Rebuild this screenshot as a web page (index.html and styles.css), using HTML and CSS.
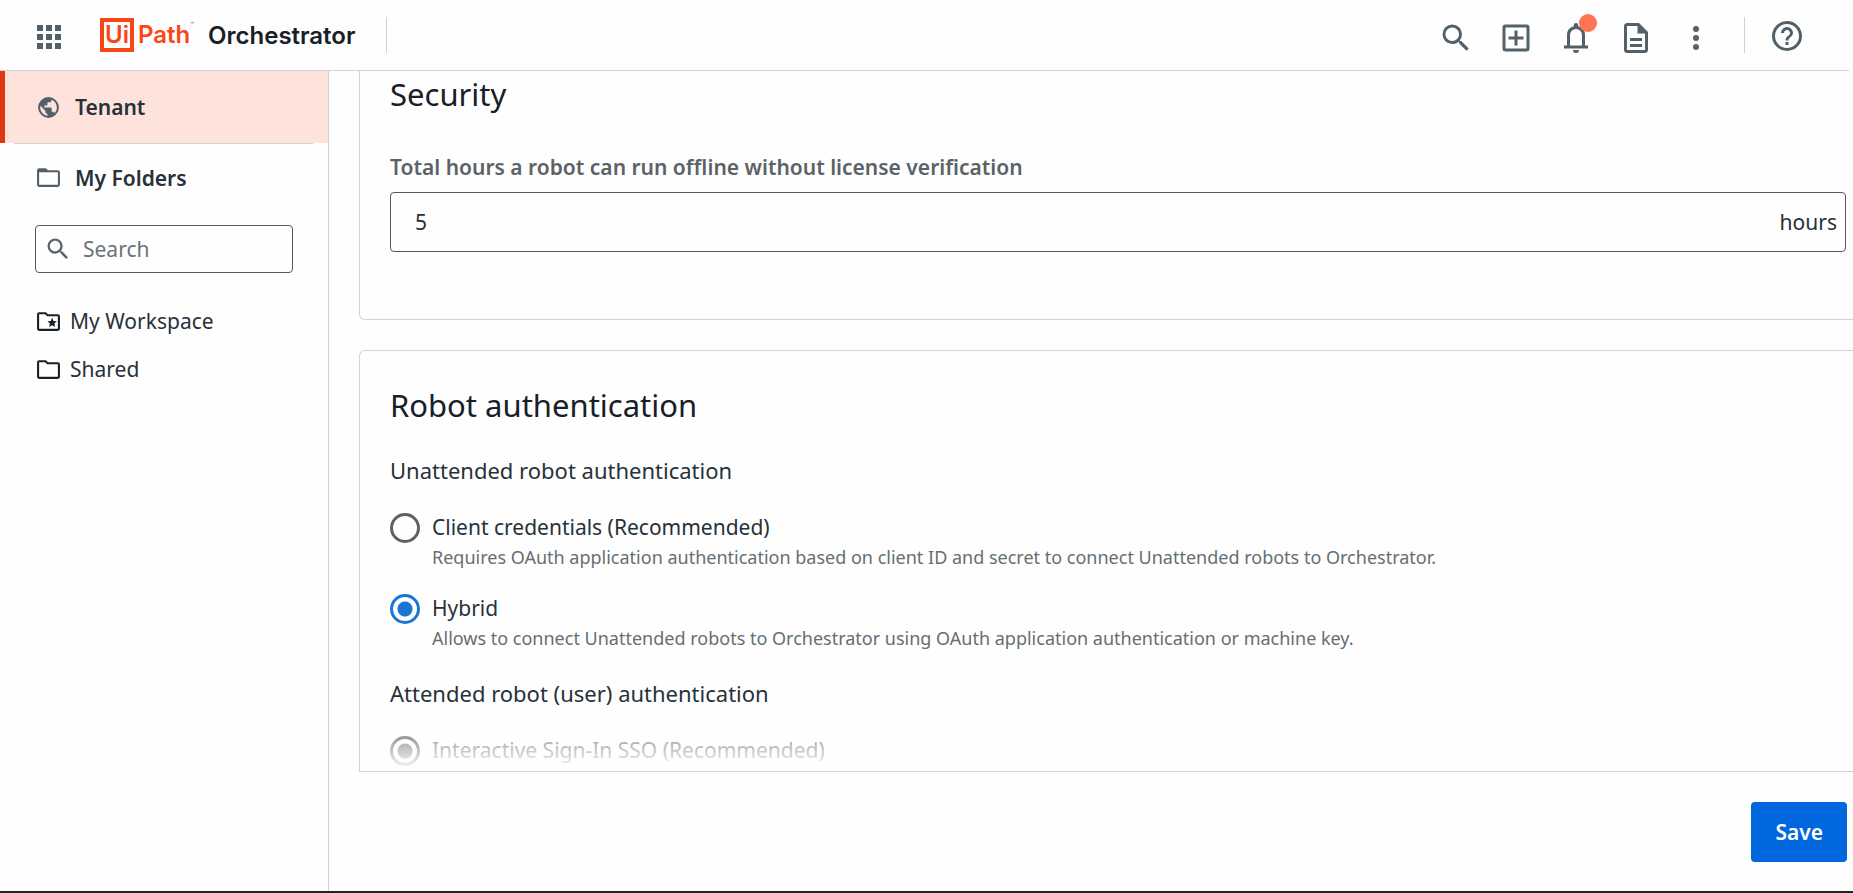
FILE: index.html
```html
<!DOCTYPE html>
<html lang="en">
<head>
<meta charset="utf-8">
<title>UiPath Orchestrator</title>
<link rel="stylesheet" href="styles.css">
</head>
<body>
<header class="topbar">
  <button class="icon-btn launcher" type="button" aria-label="Apps">
    <svg width="24" height="24" viewBox="0 0 24 24"><path d="M0 0h6v6H0zM9 0h6v6H9zM18 0h6v6h-6zM0 9h6v6H0zM9 9h6v6H9zM18 9h6v6h-6zM0 18h6v6H0zM9 18h6v6H9zM18 18h6v6h-6z"/></svg>
  </button>
  <a class="brand" href="#">
    <span class="brand-box">Ui</span><span class="brand-path">Path</span><span class="brand-tm">™</span>
    <span class="brand-name">Orchestrator</span>
  </a>
  <span class="rule"></span>
  <nav class="tools" aria-label="Tools">
    <button class="icon-btn" type="button" aria-label="Search">
      <svg width="36" height="36" viewBox="0 0 24 24"><path d="M15.5 14h-.79l-.28-.27A6.47 6.47 0 0 0 16 9.5 6.5 6.5 0 1 0 9.5 16c1.61 0 3.09-.59 4.23-1.57l.27.28v.79l5 4.99L20.49 19zm-6 0C7.01 14 5 11.99 5 9.5S7.01 5 9.5 5 14 7.01 14 9.5 11.99 14 9.5 14"/></svg>
    </button>
    <button class="icon-btn" type="button" aria-label="Add">
      <svg width="36" height="36" viewBox="0 0 24 24"><path d="M19 3H5a2 2 0 0 0-2 2v14a2 2 0 0 0 2 2h14a2 2 0 0 0 2-2V5a2 2 0 0 0-2-2m0 16H5V5h14zm-8-2h2v-4h4v-2h-4V7h-2v4H7v2h4z"/></svg>
    </button>
    <button class="icon-btn bell" type="button" aria-label="Notifications">
      <svg width="36" height="36" viewBox="0 0 24 24"><path d="M4 19v-2h2v-7a6 6 0 0 1 4.500-5.800V3.500a1.500 1.500 0 0 1 3 0v.7A6 6 0 0 1 18 10v7h2v2zm8 3a2 2 0 0 1-2-2h4a2 2 0 0 1-2 2m-4-5h8v-7a4 4 0 0 0-8 0z"/></svg>
      <span class="dot"></span>
    </button>
    <button class="icon-btn" type="button" aria-label="Documents">
      <svg width="36" height="36" viewBox="0 0 24 24"><path d="M8 16h8v2H8zm0-4h8v2H8zm6-10H6c-1.100 0-2 .9-2 2v16c0 1.100.89 2 1.990 2H18c1.100 0 2-.9 2-2V8zm4 18H6V4h7v5h5z"/></svg>
    </button>
    <button class="icon-btn" type="button" aria-label="More">
      <svg width="36" height="36" viewBox="0 0 24 24"><path d="M12 8a2 2 0 1 0 0-4 2 2 0 0 0 0 4m0 2a2 2 0 1 0 0 4 2 2 0 0 0 0-4m0 6a2 2 0 1 0 0 4 2 2 0 0 0 0-4"/></svg>
    </button>
  </nav>
  <span class="rule"></span>
  <button class="icon-btn help" type="button" aria-label="Help">
    <svg width="36" height="36" viewBox="0 0 24 24"><path d="M11 18h2v-2h-2zm1-16a10 10 0 1 0 0 20 10 10 0 0 0 0-20m0 18c-4.410 0-8-3.590-8-8s3.590-8 8-8 8 3.590 8 8-3.590 8-8 8m0-14a4 4 0 0 0-4 4h2c0-1.100.9-2 2-2s2 .9 2 2c0 2-3 1.750-3 5h2c0-2.250 3-2.500 3-5a4 4 0 0 0-4-4"/></svg>
  </button>
</header>

<div class="shell">
  <aside class="sidebar">
    <nav class="primary">
      <a class="nav-item active" href="#">
        <svg width="25" height="25" viewBox="0 0 24 24"><path d="M12 2a10 10 0 1 0 0 20 10 10 0 0 0 0-20m-1 17.930c-3.950-.49-7-3.850-7-7.930 0-.62.080-1.210.21-1.790L9 15v1c0 1.100.9 2 2 2zm6.900-2.540c-.26-.81-1-1.390-1.900-1.390h-1v-3c0-.55-.45-1-1-1H8v-2h2c.55 0 1-.45 1-1V7h2c1.100 0 2-.9 2-2v-.41c2.930 1.190 5 4.060 5 7.410 0 2.080-.8 3.970-2.100 5.390"/></svg>
        Tenant
      </a>
      <hr class="divider">
      <a class="nav-item" href="#">
        <svg width="25" height="25" viewBox="0 0 24 24"><path d="M3 3h6.500l2 2H21a2 2 0 0 1 2 2v12a2 2 0 0 1-2 2H3a2 2 0 0 1-2-2V5a2 2 0 0 1 2-2m0 4v12h18V7z"/></svg>
        My Folders
      </a>
    </nav>
    <label class="search">
      <svg width="28" height="28" viewBox="0 0 24 24"><path d="M15.500 14h-.79l-.28-.27A6.470 6.470 0 0 0 16 9.500 6.500 6.500 0 1 0 9.500 16c1.610 0 3.090-.59 4.230-1.570l.27.28v.79l5 4.990L20.490 19zm-6 0C7.010 14 5 11.990 5 9.500S7.010 5 9.500 5 14 7.010 14 9.500 11.990 14 9.500 14"/></svg>
      <input type="search" placeholder="Search" aria-label="Search folders">
    </label>
    <nav class="folders">
      <a class="folder" href="#">
        <svg width="25" height="25" viewBox="0 0 24 24"><path d="M3 3h6.500l2 2H21a2 2 0 0 1 2 2v12a2 2 0 0 1-2 2H3a2 2 0 0 1-2-2V5a2 2 0 0 1 2-2m0 2v14h18V7H10.700l-2-2z"/><path d="m15.500 8.500 1.350 2.900 3.150.4-2.300 2.200.6 3.200-2.800-1.550-2.800 1.550.6-3.200-2.300-2.200 3.150-.4z"/></svg>
        My Workspace
      </a>
      <a class="folder" href="#">
        <svg width="25" height="25" viewBox="0 0 24 24"><path d="M3 3h6.500l2 2H21a2 2 0 0 1 2 2v12a2 2 0 0 1-2 2H3a2 2 0 0 1-2-2V5a2 2 0 0 1 2-2m0 2v14h18V7H10.700l-2-2z"/></svg>
        Shared
      </a>
    </nav>
  </aside>

  <main class="main">
    <div class="content">
      <section class="card security">
        <h2>Security</h2>
        <label class="field-label" for="hours">Total hours a robot can run offline without license verification</label>
        <div class="field">
          <input id="hours" type="text" inputmode="numeric" value="5">
          <span>hours</span>
        </div>
      </section>
      <section class="card auth">
        <h2>Robot authentication</h2>
        <fieldset>
          <legend>Unattended robot authentication</legend>
          <label class="option">
            <input type="radio" name="unattended">
            <span class="option-title">Client credentials (Recommended)</span>
            <span class="option-note">Requires OAuth application authentication based on client ID and secret to connect Unattended robots to Orchestrator.</span>
          </label>
          <label class="option">
            <input type="radio" name="unattended" checked>
            <span class="option-title">Hybrid</span>
            <span class="option-note">Allows to connect Unattended robots to Orchestrator using OAuth application authentication or machine key.</span>
          </label>
        </fieldset>
        <fieldset>
          <legend>Attended robot (user) authentication</legend>
          <label class="option">
            <input type="radio" name="attended" checked disabled>
            <span class="option-title">Interactive Sign-In SSO (Recommended)</span>
          </label>
        </fieldset>
      </section>
    </div>
    <footer class="actions"><button class="save" type="submit">Save</button></footer>
  </main>
</div>
</body>
</html>
```

FILE: styles.css
```css
* { box-sizing: border-box; }

body {
  margin: 0;
  height: 100vh;
  display: flex;
  flex-direction: column;
  overflow: hidden;
  border-bottom: 2px solid #222;
  background: #fefefe;
  color: #273139;
  font: 21px/28px "Noto Sans", sans-serif;
}

a { color: inherit; text-decoration: none; }
svg { display: block; flex: none; fill: currentColor; }
input, button { font: inherit; color: inherit; }

/* Top bar */
.topbar {
  display: flex;
  align-items: center;
  height: 71px;
  flex: none;
  margin-right: 4px;
  border-bottom: 1px solid #cfd3d4;
  color: #526069;
}
.icon-btn { padding: 0; border: 0; background: none; position: relative; }
.launcher { margin: 4px 39px 0 37px; }
.brand {
  display: flex;
  align-items: center;
  font: 600 24px/34px Inter, sans-serif;
  color: #fa4616;
}
.brand-box {
  width: 34px;
  height: 34px;
  border: 4px solid;
  text-align: center;
  line-height: 26px;
}
.brand-path { margin-left: 4px; }
.brand-tm { align-self: flex-start; font-size: 6px; line-height: 16px; }
.brand-name { margin: 2px 0 0 14px; color: #182027; }
.rule { width: 1px; height: 36px; margin-left: 30px; background: #cfd3d4; }
.tools { display: flex; gap: 24px; margin: 6px 0 0 auto; }
.dot {
  position: absolute;
  top: -6px;
  right: -3px;
  width: 18px;
  height: 18px;
  border-radius: 50%;
  background: #ff7452;
}
.help { margin: 2px 44px 0 24px; }

/* Sidebar */
.shell { display: flex; flex: 1; min-height: 0; }
.sidebar {
  width: 329px;
  flex: none;
  border-right: 1px solid #cfd3d4;
}
.nav-item {
  display: flex;
  align-items: center;
  gap: 14px;
  height: 67px;
  padding-left: 36px;
  font-weight: 600;
}
.nav-item svg { color: #526069; }
.nav-item.active {
  height: 72px;
  padding-left: 31px;
  border-left: 5px solid #dc3912;
  background: #fde3dc;
}
.divider { height: 1px; margin: 0 15px 0 14px; border: 0; background: #cfd3d4; }
.search {
  display: flex;
  align-items: center;
  height: 48px;
  margin: 14px 35px 0;
  padding-left: 8px;
  border: 1px solid #55595c;
  border-radius: 4px;
  color: #5b6368;
}
.search input {
  flex: 1;
  min-width: 0;
  margin-left: 11px;
  padding: 0;
  border: 0;
  outline: 0;
  background: none;
}
.search input::placeholder { color: #6b7378; opacity: 1; }
.folders { padding: 24px 36px; }
.folder { display: flex; align-items: center; gap: 9px; height: 48px; }
.folder svg { color: #182027; }

/* Main */
.main { flex: 1; min-width: 0; display: flex; flex-direction: column; }
.content {
  position: relative;
  flex: 1;
  min-height: 0;
  margin-left: 30px;
  overflow: hidden;
  border-bottom: 1px solid #cfd3d4;
}
.content::after {
  content: "";
  position: absolute;
  inset: auto 0 0 1px;
  height: 40px;
  background: linear-gradient(rgba(254, 254, 254, 0), #fefefe);
}
.card { padding-left: 30px; border: 1px solid #d0d4d6; border-right: 0; }
.card h2 {
  margin: 0;
  font-size: 31px;
  line-height: 40px;
  font-weight: 400;
  color: #182027;
}
.security { padding-top: 3px; padding-bottom: 67px; border-top: 0; border-bottom-left-radius: 6px; }
.field-label { display: block; margin: 39px 0 11px; font-weight: 600; color: #5b6368; }
.field {
  display: flex;
  align-items: center;
  height: 60px;
  margin-right: 7px;
  padding: 0 8px 0 24px;
  border: 1px solid #55595c;
  border-radius: 4px;
}
.field input { flex: 1; min-width: 0; padding: 0; border: 0; outline: 0; background: none; }
.auth { margin-top: 30px; padding-top: 34px; padding-bottom: 40px; border-top-left-radius: 6px; }
fieldset { margin: 0; padding: 31px 0 0; border: 0; }
fieldset + fieldset { padding-top: 4px; }
legend { float: left; width: 100%; margin-bottom: 29px; padding: 0; font-size: 22px; }
.option {
  clear: both;
  display: grid;
  grid-template-columns: 30px 1fr;
  gap: 2px 12px;
  margin-bottom: 25px;
}
.option input {
  appearance: none;
  grid-row: 1;
  width: 30px;
  height: 30px;
  margin: 0;
  border: 3px solid #5a6167;
  border-radius: 50%;
}
.option input:checked {
  border-color: #1976d2;
  background: radial-gradient(#1976d2 0 7px, transparent 8px);
}
.option input:disabled {
  border-color: #85898c;
  background: radial-gradient(#92979a 0 7px, transparent 8px);
}
.option input:disabled + span { color: #8f9599; }
.option-note { grid-column: 2; font-size: 18px; line-height: 24px; color: #666e73; }

.actions { display: flex; justify-content: flex-end; padding: 30px 6px 29px; }
.save {
  height: 60px;
  padding: 0 24px;
  border: 0;
  border-radius: 4px;
  background: #0067df;
  color: #fff;
  font-weight: 600;
}
```
